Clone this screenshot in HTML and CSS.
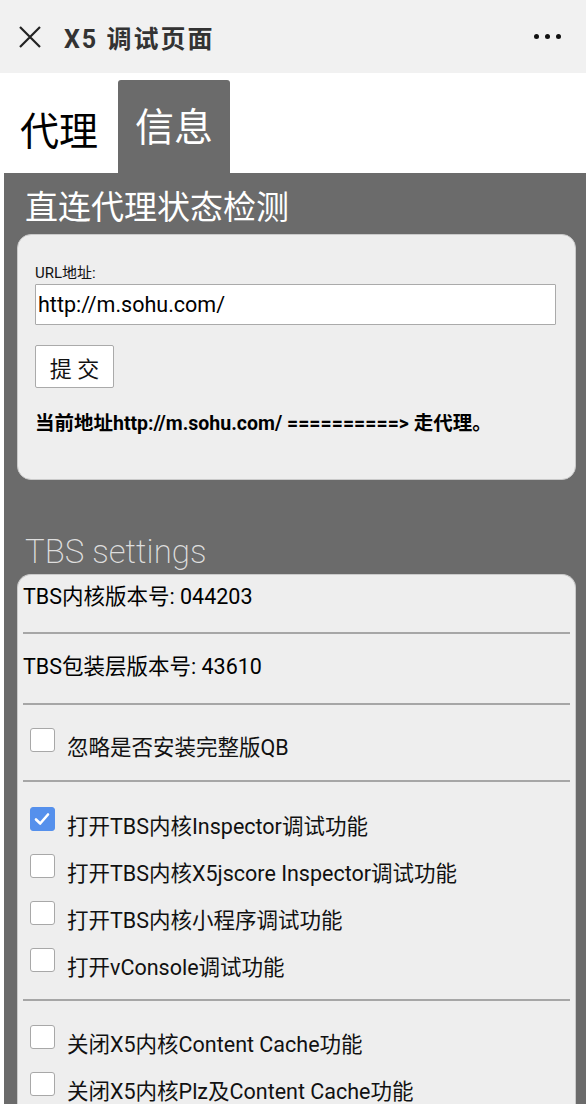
FILE: index.html
```html
<!DOCTYPE html>
<html>
<head>
    <meta charset="utf-8">
    <title>X5 调试页面</title>
    <link rel="stylesheet" href="styles.css">
</head>
<body>
    <div class="top-bar">
        <svg class="close-icon" width="24" height="24" viewBox="0 0 24 24">
            <path d="M2 2 L22 22 M22 2 L2 22" stroke="#222" stroke-width="2.2" fill="none"/>
        </svg>
        <div class="page-title">X5 调试页面</div>
        <div class="more-dots">
            <span></span><span></span><span></span>
        </div>
    </div>

    <div class="tabs">
        <div class="tab">代理</div>
        <div class="tab tab-active">信息</div>
    </div>

    <div class="panel">
        <h2 class="panel-title">直连代理状态检测</h2>
        <div class="card proxy-card">
            <div class="url-label">URL地址:</div>
            <input class="url-input" type="text" value="http://m.sohu.com/">
            <button class="submit-button" type="button">提 交</button>
            <div class="result">当前地址http://m.sohu.com/ ==========&gt; 走代理。</div>
        </div>

        <h2 class="settings-title">TBS settings</h2>
        <div class="card settings-card">
            <div class="section section-first">
                <div class="info-row">TBS内核版本号: 044203</div>
            </div>
            <div class="section section-second">
                <div class="info-row">TBS包装层版本号: 43610</div>
            </div>
            <div class="section section-single">
                <label class="check-row"><span class="box"></span><span class="check-text">忽略是否安装完整版QB</span></label>
            </div>
            <div class="section section-debug">
                <label class="check-row">
                    <span class="box box-checked">
                        <svg width="24" height="24" viewBox="0 0 24 24"><path d="M6 12.5 L10.2 16.5 L18 7.5" stroke="#fff" stroke-width="2.6" fill="none" stroke-linecap="round" stroke-linejoin="round"/></svg>
                    </span>
                    <span class="check-text">打开TBS内核Inspector调试功能</span>
                </label>
                <label class="check-row"><span class="box"></span><span class="check-text">打开TBS内核X5jscore Inspector调试功能</span></label>
                <label class="check-row"><span class="box"></span><span class="check-text">打开TBS内核小程序调试功能</span></label>
                <label class="check-row"><span class="box"></span><span class="check-text">打开vConsole调试功能</span></label>
            </div>
            <div class="section section-cache">
                <label class="check-row"><span class="box"></span><span class="check-text">关闭X5内核Content Cache功能</span></label>
                <label class="check-row"><span class="box"></span><span class="check-text">关闭X5内核Plz及Content Cache功能</span></label>
            </div>
        </div>
    </div>
</body>
</html>
```

FILE: styles.css
```css
/* debug page */
body {
    margin: 0;
    font-family: Roboto, "Noto Sans CJK SC", sans-serif;
    background-color: #ffffff;
    overflow: hidden;
}
.top-bar {
    height: 73px;
    background-color: #f1f1f1;
    display: flex;
    align-items: center;
    padding: 0 18px;
}
.close-icon {
    flex: none;
}
.page-title {
    margin-left: 22px;
    font-size: 25px;
    font-weight: bold;
    color: #333;
    letter-spacing: 2px;
    flex: 1;
}
.more-dots {
    display: flex;
    gap: 6px;
    margin-right: 7px;
}
.more-dots span {
    width: 5px;
    height: 5px;
    border-radius: 50%;
    background-color: #111;
}
.tabs {
    height: 100px;
    display: flex;
    align-items: flex-end;
}
.tab {
    font-size: 39px;
    line-height: 47px;
    padding: 0 20px 17px 20px;
    color: #000;
}
.tab-active {
    background-color: #6b6b6b;
    color: #fff;
    padding: 25px 17px 21px 17px;
    border-radius: 3px 3px 0 0;
}
.panel {
    margin-left: 4px;
    background-color: #6b6b6b;
    padding: 14px 10px 40px 13px;
}
.panel-title {
    margin: 0 0 5px 8px;
    font-size: 33px;
    line-height: 42px;
    font-weight: normal;
    color: #fff;
}
.card {
    background-color: #eeeeee;
    border: 1px solid #cacaca;
    border-radius: 14px;
}
.proxy-card {
    height: 244px;
    padding: 0 20px 0 17px;
}
.url-label {
    margin-top: 28px;
    font-size: 15px;
    line-height: 20px;
    color: #111;
}
.url-input {
    display: block;
    box-sizing: border-box;
    width: 521px;
    height: 41px;
    margin-top: 1px;
    border: 1px solid #aaa;
    border-radius: 1px;
    padding: 0 2px;
    font-family: Roboto, "Noto Sans CJK SC", sans-serif;
    font-size: 21.5px;
    color: #000;
    background-color: #fff;
}
.submit-button {
    display: block;
    width: 79px;
    height: 43px;
    margin-top: 20px;
    background-color: #fff;
    border: 1px solid #aaa;
    border-radius: 2px;
    font-family: Roboto, "Noto Sans CJK SC", sans-serif;
    font-size: 22px;
    color: #111;
    padding: 0;
}
.result {
    margin-top: 24px;
    font-size: 19.5px;
    line-height: 24px;
    font-weight: bold;
    color: #000;
    white-space: nowrap;
}
.settings-title {
    margin: 52px 0 2px 8px;
    font-size: 33px;
    line-height: 40px;
    font-weight: 200;
    color: #dedede;
}
.settings-card {
    padding: 0 5px;
    border-bottom: none;
    border-radius: 14px 14px 0 0;
}
.section {
    border-bottom: 2px solid #a6a6a6;
}
.section-first {
    padding: 0 0 13px 0;
}
.section-second {
    padding: 11px 0 14px 0;
}
.section-single {
    padding: 14px 0 14px 0;
}
.section-debug {
    padding: 15.5px 0 13.5px 0;
}
.section-cache {
    padding: 14.5px 0 0 0;
    border-bottom: none;
}
.info-row {
    height: 44px;
    line-height: 44px;
    font-size: 21.5px;
    color: #000;
}
.check-row {
    display: flex;
    align-items: center;
    height: 47px;
    padding-left: 7px;
}
.box {
    box-sizing: border-box;
    width: 25px;
    height: 24px;
    border: 1px solid #a8a8a8;
    border-radius: 3px;
    background-color: #fff;
    flex: none;
    margin-bottom: 5px;
}
.box-checked {
    background-color: #5590ec;
    border-color: #5590ec;
}
.box-checked svg {
    display: block;
    margin: -1px;
}
.check-text {
    margin-left: 12px;
    margin-top: 6px;
    font-size: 21.5px;
    color: #111;
}
```
